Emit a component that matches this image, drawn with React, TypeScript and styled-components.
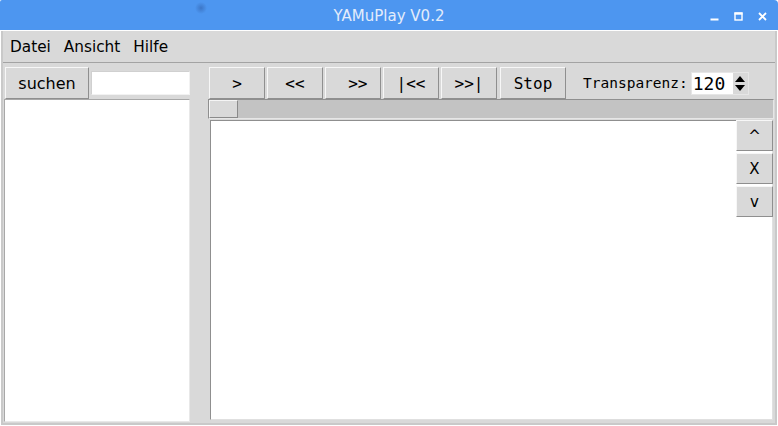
import styled, { createGlobalStyle } from "styled-components";

const GlobalStyle = createGlobalStyle`
  html, body {
    margin: 0;
    padding: 0;
    background: #ffffff;
  }
  * {
    box-sizing: border-box;
  }
`;

const transportButtons = [">", "<<", " >>", "|<<", ">>|"];

export default function App() {
  return (
    <>
      <GlobalStyle />
      <Window>
        <TitleBar>
          <Title>YAMuPlay V0.2</Title>
          <TitleControls>
            <svg width="9" height="9" viewBox="0 0 9 9">
              <rect x="0.5" y="6.5" width="8" height="2" fill="#ffffff" />
            </svg>
            <svg width="9" height="9" viewBox="0 0 9 9">
              <rect x="1" y="1" width="7" height="7" fill="none" stroke="#ffffff" strokeWidth="1.4" />
              <rect x="0.5" y="0.5" width="8" height="2.2" fill="#ffffff" />
            </svg>
            <svg width="9" height="9" viewBox="0 0 9 9">
              <path d="M1 1 L8 8 M8 1 L1 8" stroke="#ffffff" strokeWidth="1.8" />
            </svg>
          </TitleControls>
        </TitleBar>
        <Body>
          <MenuBar>
            <MenuItem>Datei</MenuItem>
            <MenuItem>Ansicht</MenuItem>
            <MenuItem>Hilfe</MenuItem>
          </MenuBar>
          <Main>
            <LeftColumn>
              <SearchRow>
                <SearchButton>suchen</SearchButton>
                <Entry />
              </SearchRow>
              <ListBox />
            </LeftColumn>
            <RightColumn>
              <Toolbar>
                {transportButtons.map((label) => (
                  <ToolButton key={label}>{label}</ToolButton>
                ))}
                <ToolButton $wide>Stop</ToolButton>
                <SpinLabel>Transparenz:</SpinLabel>
                <SpinBox>
                  <SpinValue>120</SpinValue>
                  <SpinArrows>
                    <svg width="12" height="9" viewBox="0 0 12 9">
                      <path d="M1 8 L6 2 L11 8 Z" fill="#000000" />
                    </svg>
                    <svg width="12" height="9" viewBox="0 0 12 9">
                      <path d="M1 1 L11 1 L6 7 Z" fill="#000000" />
                    </svg>
                  </SpinArrows>
                </SpinBox>
              </Toolbar>
              <Scale>
                <ScaleHandle />
              </Scale>
              <TextArea>
                <SideButtons>
                  <SideButton>^</SideButton>
                  <SideButton>X</SideButton>
                  <SideButton>v</SideButton>
                </SideButtons>
              </TextArea>
            </RightColumn>
          </Main>
        </Body>
      </Window>
    </>
  );
}

const Window = styled.div`
  width: 778px;
  height: 426px;
  display: flex;
  flex-direction: column;
  background: #ffffff;
  font-family: "DejaVu Sans", sans-serif;
`;

const TitleBar = styled.div`
  height: 30px;
  flex: none;
  display: flex;
  align-items: center;
  justify-content: center;
  position: relative;
  background-color: #4d96f0;
  background-image: radial-gradient(circle at 201px 8px, rgba(40, 80, 150, 0.45) 0, rgba(77, 150, 240, 0) 6px);
  border-top-right-radius: 4px;
  border-top-left-radius: 2px;
`;

const Title = styled.div`
  color: #e3ecfb;
  font-family: "DejaVu Sans", sans-serif;
  font-size: 15px;
  padding-top: 1px;
`;

const TitleControls = styled.div`
  position: absolute;
  right: 11px;
  top: 12px;
  display: flex;
  gap: 15px;
`;

const Body = styled.div`
  flex: 1;
  display: flex;
  flex-direction: column;
  background: #d9d9d9;
  margin: 1px;
  border-left: 2px solid #c9c9c9;
  border-right: 2px solid #c9c9c9;
  border-bottom: 2px solid #c9c9c9;
`;

const MenuBar = styled.div`
  height: 32px;
  flex: none;
  display: flex;
  align-items: center;
  padding-left: 7px;
  gap: 13px;
  border-bottom: 1px solid #a3a3a3;
  font-size: 15.3px;
  color: #000000;
`;

const MenuItem = styled.span`
  padding: 0;
`;

const Main = styled.div`
  flex: 1;
  display: flex;
  padding: 4px 0 1px 1px;
  gap: 18px;
`;

const LeftColumn = styled.div`
  width: 186px;
  display: flex;
  flex-direction: column;
`;

const SearchRow = styled.div`
  display: flex;
  align-items: center;
  gap: 2px;
  padding-left: 1px;
`;

const RaisedButton = styled.div`
  height: 32px;
  display: flex;
  align-items: center;
  justify-content: center;
  background: #d9d9d9;
  border: 1px solid;
  border-color: #f7f7f7 #8f8f8f #8f8f8f #f7f7f7;
  color: #000000;
  white-space: pre;
`;

const SearchButton = styled(RaisedButton)`
  width: 84px;
  font-family: "DejaVu Sans", sans-serif;
  font-size: 16px;
`;

const Entry = styled.div`
  width: 99px;
  height: 24px;
  background: #ffffff;
  border: 1px solid;
  border-color: #d0d0d0 #f2f2f2 #f2f2f2 #d0d0d0;
`;

const ListBox = styled.div`
  flex: 1;
  background: #ffffff;
  border: 1px solid;
  border-color: #a8a8a8 #e8e8e8 #e8e8e8 #a8a8a8;
`;

const RightColumn = styled.div`
  flex: 1;
  display: flex;
  flex-direction: column;
  padding-right: 1px;
`;

const Toolbar = styled.div`
  display: flex;
  align-items: center;
  gap: 2px;
  padding-left: 1px;
`;

const ToolButton = styled(RaisedButton)<{ $wide?: boolean }>`
  width: ${(p) => (p.$wide ? "66px" : "56px")};
  margin-left: ${(p) => (p.$wide ? "1px" : "0")};
  font-family: "DejaVu Sans Mono", monospace;
  font-size: 16px;
`;

const SpinLabel = styled.span`
  margin-left: 15px;
  font-family: "DejaVu Sans Mono", monospace;
  font-size: 14.5px;
  color: #000000;
`;

const SpinBox = styled.div`
  margin-left: 1px;
  width: 58px;
  height: 23px;
  display: flex;
  background: #ffffff;
  border: 1px solid #e6e6e6;
`;

const SpinValue = styled.div`
  flex: 1;
  display: flex;
  align-items: center;
  padding-left: 1px;
  font-family: "DejaVu Sans Mono", monospace;
  font-size: 18px;
  color: #000000;
`;

const SpinArrows = styled.div`
  width: 15px;
  display: flex;
  flex-direction: column;
  justify-content: center;
  align-items: center;
  background: #d9d9d9;
  gap: 1px;
`;

const Scale = styled.div`
  height: 20px;
  display: flex;
  align-items: stretch;
  background: #c3c3c3;
  border: 1px solid;
  border-color: #8f8f8f #e6e6e6 #e6e6e6 #8f8f8f;
`;

const ScaleHandle = styled.div`
  width: 29px;
  background: #d9d9d9;
  border: 1px solid;
  border-color: #f5f5f5 #8a8a8a #8a8a8a #f5f5f5;
`;

const TextArea = styled.div`
  flex: 1;
  margin: 1px 1px 2px 2px;
  display: flex;
  justify-content: flex-end;
  align-items: flex-start;
  background: #ffffff;
  border: 1px solid;
  border-color: #8f8f8f #e0e0e0 #e0e0e0 #8f8f8f;
`;

const SideButtons = styled.div`
  display: flex;
  flex-direction: column;
  gap: 2px;
  margin: -1px -1px 0 0;
`;

const SideButton = styled(RaisedButton)`
  width: 37px;
  height: 31px;
  font-family: "DejaVu Sans", sans-serif;
  font-size: 15px;
`;
